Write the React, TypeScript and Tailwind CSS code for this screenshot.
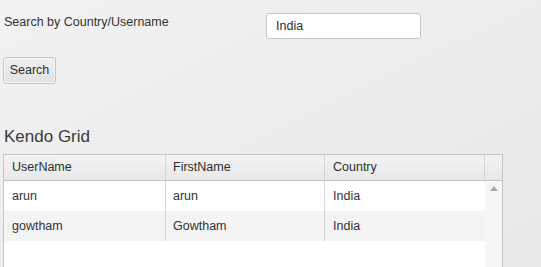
import { useState } from 'react';

interface User {
  userName: string;
  firstName: string;
  country: string;
}

const USERS: User[] = [
  { userName: 'arun', firstName: 'arun', country: 'India' },
  { userName: 'gowtham', firstName: 'Gowtham', country: 'India' },
];

export default function App() {
  const [query, setQuery] = useState('India');

  return (
    <div className="h-[267px] w-[541px] overflow-hidden bg-gradient-to-br from-[#f2f2f2] to-[#e8e8e8] font-['Liberation_Sans',Arial,sans-serif] text-[12.5px] text-[#333]">
      <div className="flex h-[40px] items-start pl-[4px] pt-[13px]">
        <span className="w-[262px]">Search by Country/Username</span>
        <input
          className="h-[26px] w-[155px] rounded-[3px] border border-[#c5c5c5] bg-white px-[9px] text-[12.5px] text-[#2e2e2e] outline-none"
          value={query}
          onChange={(event) => setQuery(event.target.value)}
        />
      </div>
      <div className="pl-[3px] pt-[17px]">
        <button className="h-[27px] w-[53px] rounded-[3px] border border-[#c5c5c5] bg-gradient-to-b from-[#f0f0f0] to-[#e2e2e2] text-[12.5px] text-[#2e2e2e] shadow-[inset_0_0_0_1px_#f6f6f6]">
          Search
        </button>
      </div>
      <h2 className="pl-[4px] pt-[43px] text-[17px] leading-[20px] text-[#3a3a3a]">Kendo Grid</h2>
      <div className="ml-[3px] mt-[7px] w-[500px] border border-[#c5c5c5] bg-white">
        <div className="flex h-[26px] border-b border-[#c5c5c5] bg-gradient-to-b from-[#f3f3f3] to-[#e8e8e8] text-[#2e2e2e]">
          <div className="flex w-[162px] items-center border-r border-[#d5d5d5] pl-[8px]">UserName</div>
          <div className="flex w-[159px] items-center border-r border-[#d5d5d5] pl-[7px]">FirstName</div>
          <div className="flex w-[160px] items-center border-r border-[#d5d5d5] pl-[8px]">Country</div>
          <div className="flex-1" />
        </div>
        <div className="flex h-[100px]">
          <div className="w-[481px]">
            {USERS.map((user, index) => (
              <div key={user.userName} className={`flex h-[30px] ${index % 2 ? 'bg-[#f4f4f4]' : 'bg-white'}`}>
                <div className="flex w-[162px] items-center border-r border-[#d5d5d5] pl-[8px]">{user.userName}</div>
                <div className="flex w-[159px] items-center border-r border-[#d5d5d5] pl-[7px]">{user.firstName}</div>
                <div className="flex w-[160px] items-center pl-[8px]">{user.country}</div>
              </div>
            ))}
          </div>
          <div className="relative flex-1 bg-[#f6f6f6]">
            <svg className="absolute left-[5px] top-[5px]" width="8" height="5" viewBox="0 0 8 5">
              <path d="M4 0 L8 5 L0 5 Z" fill="#a8a8a8" />
            </svg>
          </div>
        </div>
      </div>
    </div>
  );
}
